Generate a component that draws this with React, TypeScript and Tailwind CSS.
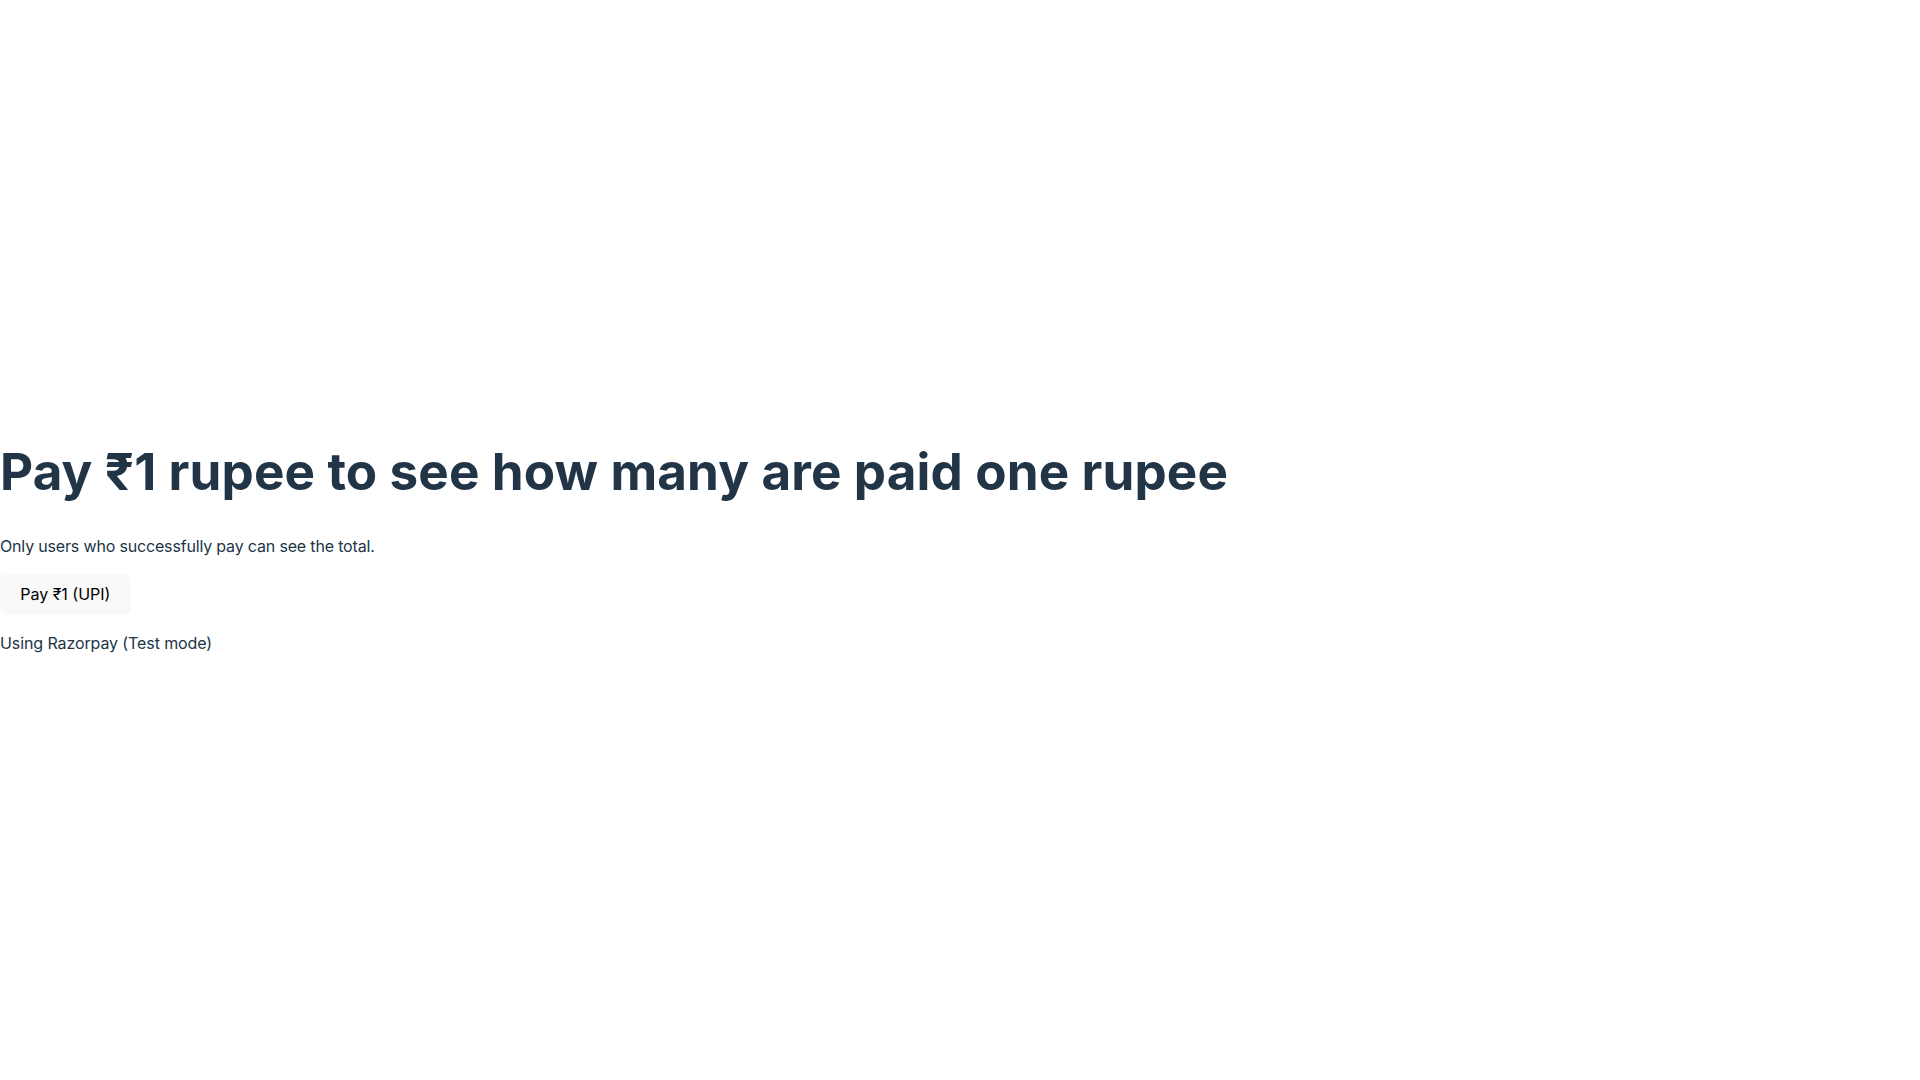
export default function App() {
  return (
    <div className="min-h-screen flex items-center bg-white text-[#213547] font-['Inter',system-ui,sans-serif] text-base leading-normal antialiased">
      <div>
        <h1 className="my-[0.67em] text-[51.2px] leading-[1.1] font-bold tracking-[0.12px]">
          Pay ₹1 rupee to see how many are paid one rupee
        </h1>
        <p className="my-4 tracking-[-0.17px]">Only users who successfully pay can see the total.</p>
        <button className="rounded-lg border border-transparent bg-[#f9f9f9] px-[1.2em] py-[0.6em] text-base font-normal leading-[normal] text-black cursor-pointer">
          Pay ₹1 (UPI)
        </button>
        <p className="my-4 tracking-[-0.1px]">Using Razorpay (Test mode)</p>
      </div>
    </div>
  );
}
